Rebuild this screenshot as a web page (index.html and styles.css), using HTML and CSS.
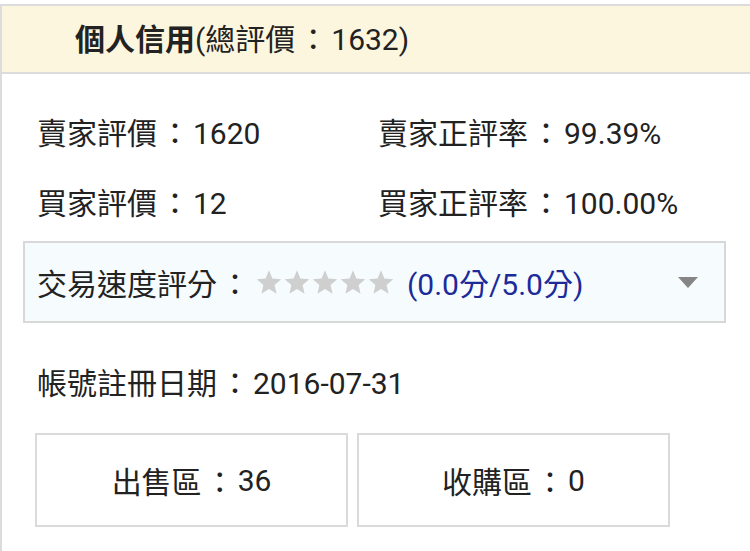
FILE: index.html
```html
<!DOCTYPE html>
<html lang="zh-Hant">
<head>
<meta charset="utf-8">
<link rel="stylesheet" href="styles.css">
</head>
<body>
<div class="panel">
  <div class="header"><b class="title">個人信用</b>(總評價<span class="c">：</span>1632)</div>
  <div class="content">
    <div class="stats">
      <div class="stat">賣家評價<span class="c">：</span>1620</div>
      <div class="stat">賣家正評率<span class="c">：</span>99.39%</div>
      <div class="stat">買家評價<span class="c">：</span>12</div>
      <div class="stat">買家正評率<span class="c">：</span>100.00%</div>
    </div>
    <div class="speed">
      <span class="label">交易速度評分<span class="c">：</span></span>
      <span class="stars">
        <svg viewBox="0 0 24 24"><polygon points="12,2 14.9,8.9 22.5,9.6 16.8,14.6 18.5,22 12,18.1 5.5,22 7.2,14.6 1.5,9.6 9.1,8.9"/></svg>
        <svg viewBox="0 0 24 24"><polygon points="12,2 14.9,8.9 22.5,9.6 16.8,14.6 18.5,22 12,18.1 5.5,22 7.2,14.6 1.5,9.6 9.1,8.9"/></svg>
        <svg viewBox="0 0 24 24"><polygon points="12,2 14.9,8.9 22.5,9.6 16.8,14.6 18.5,22 12,18.1 5.5,22 7.2,14.6 1.5,9.6 9.1,8.9"/></svg>
        <svg viewBox="0 0 24 24"><polygon points="12,2 14.9,8.9 22.5,9.6 16.8,14.6 18.5,22 12,18.1 5.5,22 7.2,14.6 1.5,9.6 9.1,8.9"/></svg>
        <svg viewBox="0 0 24 24"><polygon points="12,2 14.9,8.9 22.5,9.6 16.8,14.6 18.5,22 12,18.1 5.5,22 7.2,14.6 1.5,9.6 9.1,8.9"/></svg>
      </span>
      <span class="score">(0.0分/5.0分)</span>
      <span class="caret"></span>
    </div>
    <div class="date">帳號註冊日期<span class="c">：</span>2016-07-31</div>
    <div class="zones">
      <div class="zone">出售區<span class="c">：</span>36</div>
      <div class="zone">收購區<span class="c">：</span>0</div>
    </div>
  </div>
</div>
</body>
</html>
```
FILE: styles.css
```css
html, body {
  margin: 0;
  padding: 0;
  background: #ffffff;
}
body {
  font-family: "Roboto", "Noto Sans CJK TC", sans-serif;
  font-size: 30px;
  color: #222222;
  overflow: hidden;
  width: 750px;
  height: 551px;
}
.c {
  display: inline-block;
  padding-left: 3px;
  padding-right: 3px;
}
.panel {
  margin-top: 4px;
  border-top: 2px solid #dcdcdc;
  border-left: 2px solid #dcdcdc;
  height: 545px;
}
.header {
  height: 66px;
  line-height: 68px;
  padding-left: 73px;
  background: #fdf6df;
  border-bottom: 2px solid #dcdcdc;
}
.title {
  font-weight: 700;
}
.content {
  padding-left: 21px;
}
.stats {
  display: grid;
  grid-template-columns: 341px 1fr;
  padding: 25px 0 0 14px;
}
.stat {
  height: 70px;
  line-height: 70px;
}
.speed {
  margin-top: 2px;
  width: 703px;
  height: 82px;
  box-sizing: border-box;
  border: 2px solid #d8d8d8;
  background: #f6fcfe;
  display: flex;
  align-items: center;
  padding: 0 26px 0 12px;
}
.stars {
  display: flex;
  gap: 0;
  margin-left: 2px;
  margin-right: 12px;
}
.stars svg {
  width: 28px;
  height: 28px;
  fill: #cfcfcf;
}
.score {
  color: #1c2a9a;
}
.caret {
  margin-left: auto;
  width: 0;
  height: 0;
  border-left: 10px solid transparent;
  border-right: 10px solid transparent;
  border-top: 11px solid #858585;
}
.date {
  margin-top: 26px;
  height: 70px;
  line-height: 70px;
  padding-left: 14px;
}
.zones {
  margin-top: 14px;
  padding-left: 12px;
  display: flex;
  gap: 9px;
}
.zone {
  width: 313px;
  height: 94px;
  box-sizing: border-box;
  border: 2px solid #dadada;
  display: flex;
  align-items: center;
  justify-content: center;
}
```
